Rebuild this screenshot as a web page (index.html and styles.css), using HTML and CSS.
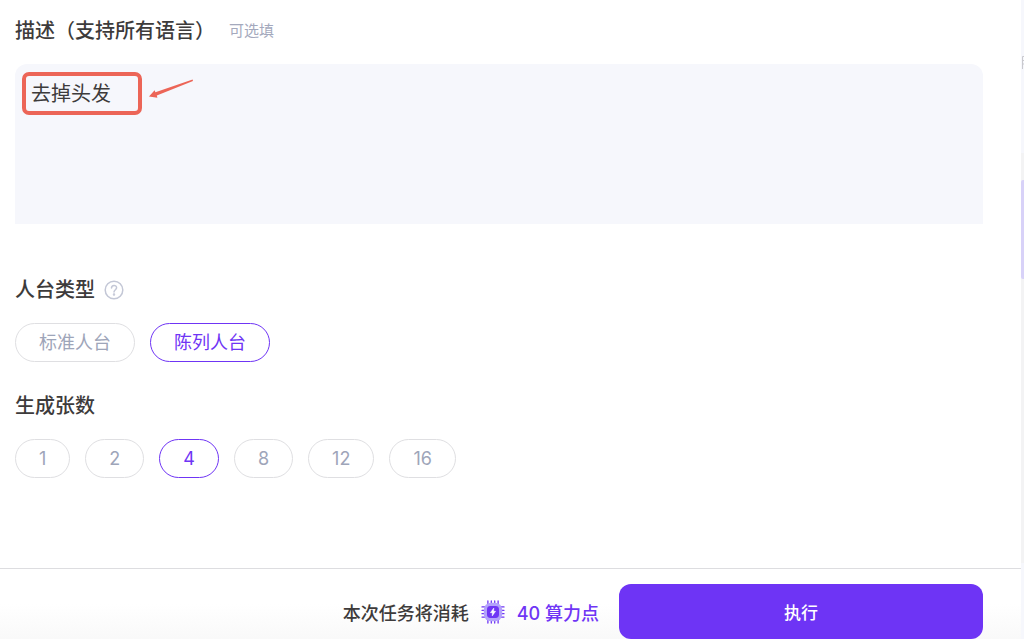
FILE: index.html
```html
<!DOCTYPE html>
<html lang="zh-CN">
<head>
    <meta charset="UTF-8">
    <meta name="viewport" content="width=device-width, initial-scale=1.0">
    <title>人台换模特</title>
    <link rel="stylesheet" href="styles.css">
</head>
<body>
    <form class="panel">
        <div class="content">
            <div class="title-row">
                <label class="title" for="desc">描述（支持所有语言）</label>
                <span class="optional">可选填</span>
            </div>
            <div class="desc-box">
                <textarea id="desc" class="desc">去掉头发</textarea>
                <div class="mark"></div>
                <svg class="arrow" width="46" height="20" viewBox="0 0 46 20">
                    <path d="M1 17.6 L6.6 11.2 L7.4 13.2 L44.6 0.6 L45 2 L8.8 16.6 L9.4 18.8 Z" fill="#ec6557"/>
                </svg>
            </div>

            <fieldset class="group">
                <legend class="title">人台类型
                    <svg class="help" width="20" height="20" viewBox="0 0 20 20" fill="none" stroke="#c3c7d6" stroke-width="1.5" stroke-linecap="round">
                        <circle cx="10" cy="10" r="8.8"/>
                        <path d="M7.5 8.1 C7.5 4.5 12.6 4.6 12.6 7.8 C12.6 9.7 10 9.8 10 12"/>
                        <circle cx="10" cy="14.6" r="0.5"/>
                    </svg>
                </legend>
                <div class="pills">
                    <label class="pill"><input type="radio" name="type">标准人台</label>
                    <label class="pill"><input type="radio" name="type" checked>陈列人台</label>
                </div>
            </fieldset>

            <fieldset class="group">
                <legend class="title">生成张数</legend>
                <div class="pills">
                    <label class="pill"><input type="radio" name="count">1</label>
                    <label class="pill"><input type="radio" name="count">2</label>
                    <label class="pill"><input type="radio" name="count" checked>4</label>
                    <label class="pill"><input type="radio" name="count">8</label>
                    <label class="pill"><input type="radio" name="count">12</label>
                    <label class="pill"><input type="radio" name="count">16</label>
                </div>
            </fieldset>
        </div>

        <div class="footer">
            <div class="cost">
                <span>本次任务将消耗</span>
                <svg class="chip" width="24" height="24" viewBox="0 0 24 24">
                    <path d="M6.9 1V23M10.3 1V23M13.7 1V23M17.1 1V23M1 6.9H23M1 10.3H23M1 13.7H23M1 17.1H23" stroke="#6f35f5" stroke-width="1.3" stroke-linecap="round"/>
                    <rect x="2.8" y="2.8" width="18.4" height="18.4" rx="7" fill="#b3a2fa"/>
                    <rect x="6" y="6" width="12" height="12" rx="3.4" fill="#6f35f5"/>
                    <path d="M12.8 8 L9.4 12.7 H11.4 L11.2 16 L14.6 11.3 H12.6 Z" fill="#fff" stroke="#fff" stroke-width="0.5" stroke-linejoin="round"/>
                </svg>
                <span class="points">40 算力点</span>
            </div>
            <button type="button" class="run">执行</button>
        </div>
    </form>

    <div class="side">
        <div class="side-top">
            <svg width="3" height="14" viewBox="0 0 3 14" fill="none" stroke="#c9c9ce">
                <path d="M1.5 14V1.5H3M1.5 5.5H3M1.5 9H3"/>
            </svg>
        </div>
        <div class="track"><div class="thumb"></div></div>
    </div>
</body>
</html>
```
FILE: styles.css
```css
* {
    box-sizing: border-box;
}

body {
    margin: 0;
    display: flex;
    min-height: 100vh;
    background-color: #fff;
    color: #3d3b3b;
    font-family: Inter, "Noto Sans CJK SC", sans-serif;
    font-size: 18px;
}

.panel {
    flex: 1;
    display: flex;
    flex-direction: column;
}

.content {
    flex: 1;
    padding: 16px 38px 0 15px;
}

.title-row {
    display: flex;
    align-items: center;
    gap: 14px;
    margin-bottom: 18px;
}

.title {
    display: flex;
    align-items: center;
    padding: 0;
    font-size: 20px;
    font-weight: 500;
    line-height: 30px;
}

.optional {
    color: #a4a9bd;
    font-size: 15px;
    line-height: 24px;
}

.desc-box {
    position: relative;
    margin-bottom: 51px;
}

.desc {
    display: block;
    width: 100%;
    height: 160px;
    padding: 15px 16px;
    border: none;
    border-radius: 12px 12px 0 0;
    outline: none;
    resize: none;
    background-color: #f6f7fc;
    color: #3d3b3b;
    font-family: inherit;
    font-size: 20px;
    line-height: 30px;
}

/* Red highlight over the text */
.mark {
    position: absolute;
    top: 8px;
    left: 7px;
    width: 120px;
    height: 43px;
    border: 4px solid #ec6557;
    border-radius: 7px;
    pointer-events: none;
}

.arrow {
    position: absolute;
    top: 15px;
    left: 133px;
    pointer-events: none;
}

.group {
    margin: 0 0 29px;
    padding: 0;
    border: none;
}

.help {
    margin-left: 9px;
}

.pills {
    display: flex;
    flex-wrap: wrap;
    gap: 15px;
    margin-top: 18px;
}

.pill {
    padding: 0 23px;
    border: 1px solid #dfdfe2;
    border-radius: 20px;
    color: #9ea5b9;
    line-height: 37px;
    cursor: pointer;
}

.pill input {
    position: absolute;
    opacity: 0;
    pointer-events: none;
}

.pill:has(input:checked) {
    border-color: #6f35f5;
    color: #6f35f5;
}

.footer {
    display: flex;
    align-items: center;
    justify-content: flex-end;
    gap: 20px;
    padding: 15px 38px 0 15px;
    border-top: 1px solid #dddde0;
    background: linear-gradient(#fff 50%, #f9f9f9);
}

.cost {
    display: flex;
    align-items: center;
    gap: 12px;
    font-weight: 500;
}

.points {
    color: #6f35f5;
}

.run {
    width: 40%;
    max-width: 364px;
    height: 55px;
    border: none;
    border-radius: 12px;
    background-color: #6e34f5;
    color: #fff;
    font-family: inherit;
    font-size: 17px;
    font-weight: 500;
    cursor: pointer;
}

/* Edge of the preview column */
.side {
    width: 3px;
    display: flex;
    flex-direction: column;
    background-color: #f6f7fc;
}

.side-top {
    height: 153px;
    padding-top: 55px;
    line-height: 0;
}

.track {
    height: 410px;
    padding-top: 27px;
    background-color: #f3f3f4;
}

.thumb {
    height: 99px;
    border-radius: 2px 0 0 2px;
    background-color: #d8d2f8;
}
```
